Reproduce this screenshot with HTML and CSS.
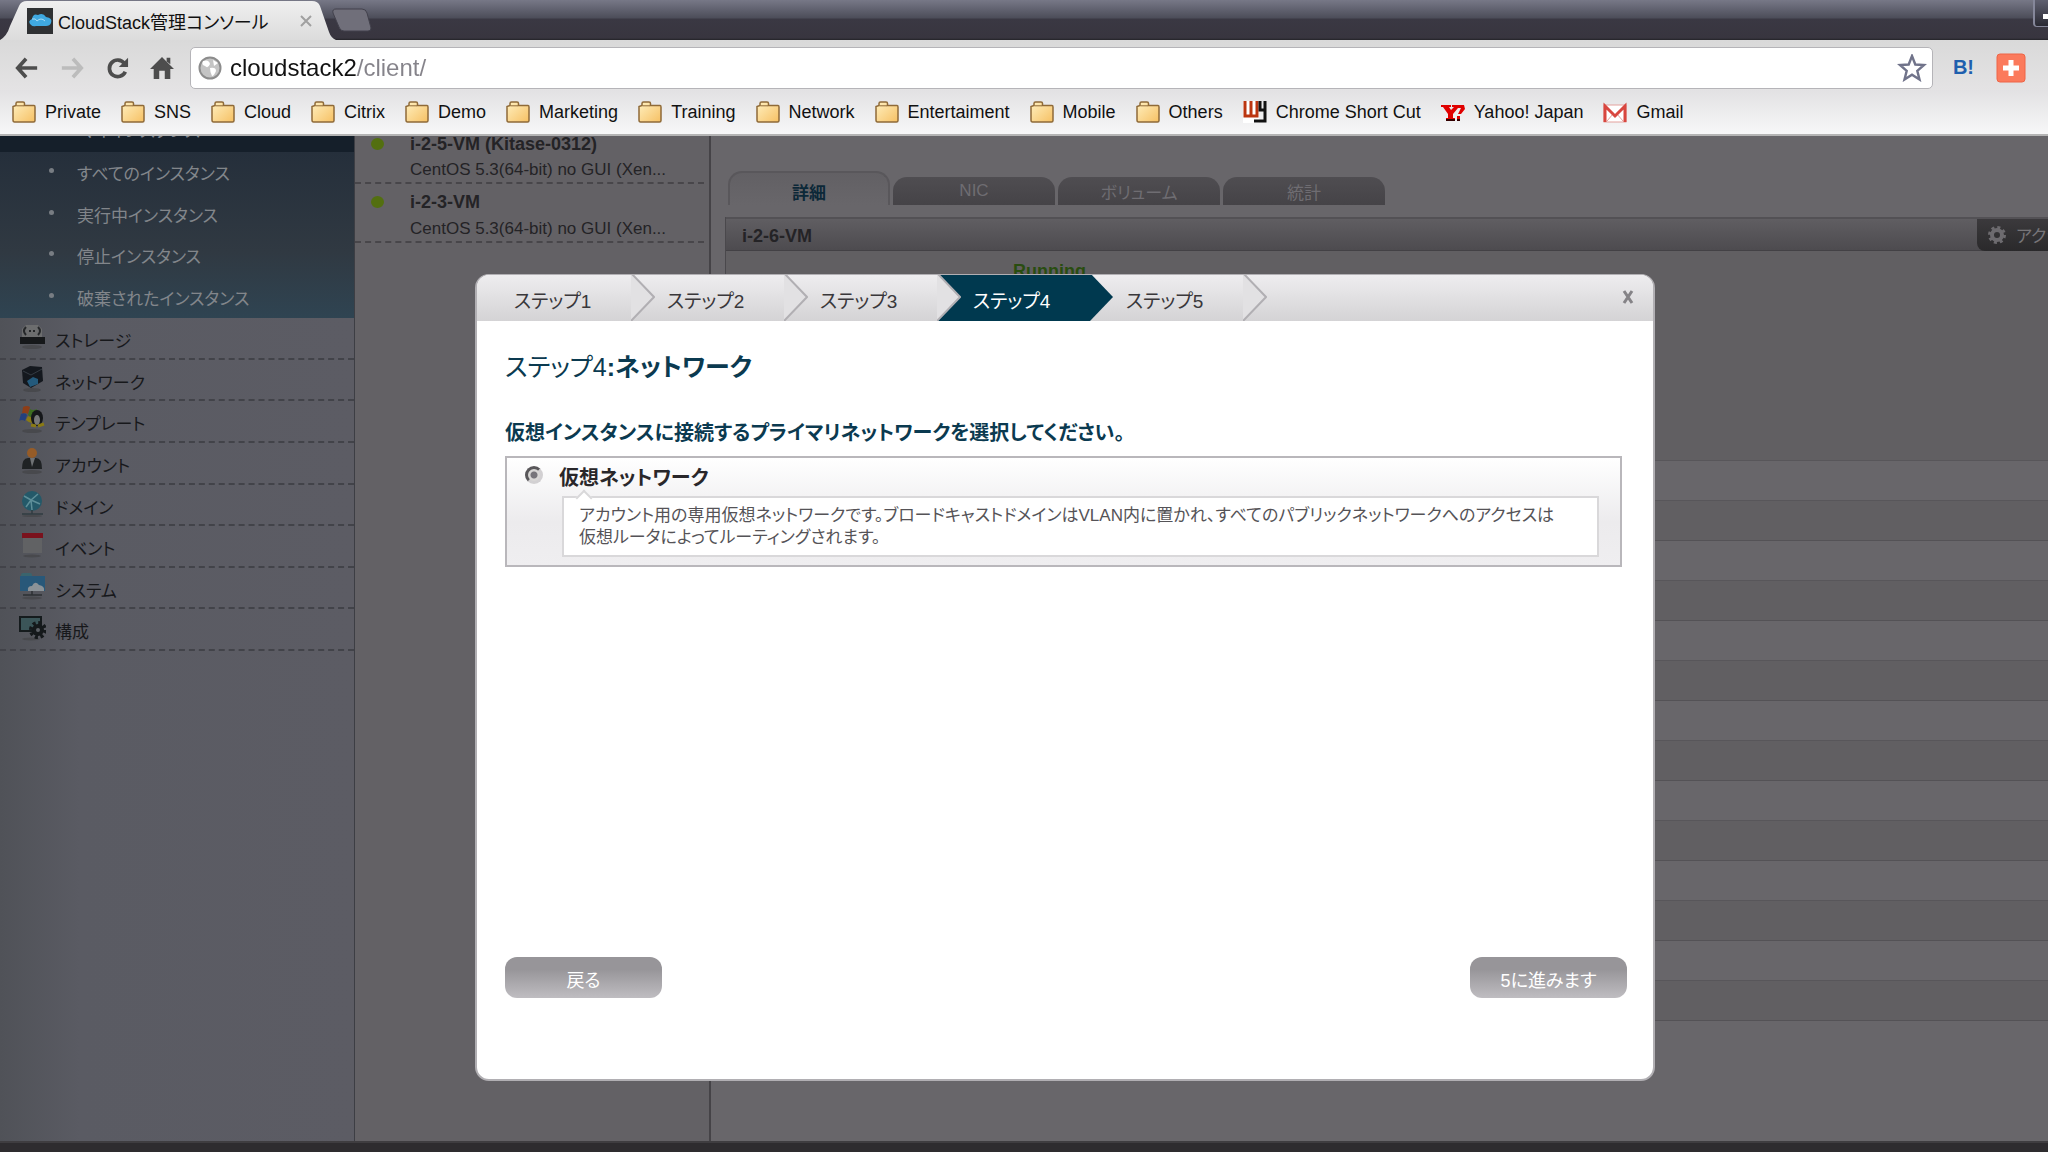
FILE: index.html
```html
<!DOCTYPE html>
<html lang="ja">
<head>
  <meta charset="UTF-8" />
  <meta name="viewport" content="width=device-width, initial-scale=1.0">
  <title>CloudStack管理コンソール</title>
  <link rel="stylesheet" href="styles.css">
</head>
<body>

  <svg class="defs" width="0" height="0" aria-hidden="true">
    <defs>
      <linearGradient id="folderFill" x1="0" y1="0" x2="1" y2="1">
        <stop offset="0" stop-color="#fff0c0" />
        <stop offset="1" stop-color="#f6c063" />
      </linearGradient>
      <linearGradient id="tabFill" x1="0" y1="0" x2="0" y2="1">
        <stop offset="0" stop-color="#efefef" />
        <stop offset="1" stop-color="#dcdcdc" />
      </linearGradient>
      <symbol id="folder" viewBox="0 0 24 22">
        <path d="M1 19V5.500L4 4.500V2.500Q4 1 5.500 1H11Q12.500 1 12.500 2.500V4.500H22Q23 4.500 23 6V19.500Q23 21 21.500 21H2.500Q1 21 1 19Z" fill="url(#folderFill)" stroke="#8f6a38" stroke-width="1.500" />
        <path d="M4.500 4.800H12" stroke="#8f6a38" />
      </symbol>
    </defs>
  </svg>

  <header class="browser">
    <div class="tabstrip">
      <div class="tab">
        <svg class="tab-shape" viewBox="0 0 336 40" preserveAspectRatio="none"><path d="M0 40Q7 36 10 26L19 6Q21 1 27 1H312Q318 1 320 6L329 32Q331 38 336 40Z" fill="url(#tabFill)" /></svg>
        <svg class="favicon" viewBox="0 0 26 26"><rect width="26" height="26" fill="#2f3133" /><path d="M4 17Q0 13 5 11Q6 5 11 7Q16 4 19 9Q26 10 24 15Q23 18 19 18H9Q6 19 4 17Z" fill="#3fa9e0" /><path d="M5 11Q9 10 10 13Q14 9 18 13" fill="none" stroke="#a6dcf6" /></svg>
        <span class="tab-title">CloudStack管理コンソール</span>
        <button class="tab-close" aria-label="閉じる"><svg viewBox="0 0 12 12"><path d="M1 1L11 11M11 1L1 11" stroke="#a0a0a0" stroke-width="2" /></svg></button>
      </div>
      <button class="new-tab" aria-label="新しいタブ"><svg viewBox="0 0 40 24"><path d="M4 1H30Q34 1 35 5L39 20Q39 23 36 23H12Q8 23 7 19L1 5Q0 1 4 1Z" fill="#706f7a" stroke="#42414c" /></svg></button>
      <button class="minimize" aria-label="最小化"><span></span></button>
    </div>

    <div class="toolbar">
      <div class="nav-buttons">
        <button aria-label="戻る"><svg viewBox="0 0 26 26"><path d="M3 13H24M12 3L3 13L12 23" fill="none" stroke="#4d4d4d" stroke-width="4" /></svg></button>
        <button aria-label="進む"><svg viewBox="0 0 26 26"><path d="M2 13H23M14 3L23 13L14 23" fill="none" stroke="#bcbcbc" stroke-width="4" /></svg></button>
        <button aria-label="再読み込み"><svg viewBox="0 0 26 26"><path d="M21 8A9 9 0 1 0 22 17" fill="none" stroke="#4d4d4d" stroke-width="4" /><path d="M25 2V12H15Z" fill="#4d4d4d" /></svg></button>
        <button aria-label="ホーム"><svg viewBox="0 0 26 26"><path d="M13 1L26 14H22V25H16V16H10V25H4V14H0Z" fill="#4d4d4d" /><path d="M18 2H22V9L18 6Z" fill="#4d4d4d" /></svg></button>
      </div>
      <div class="omnibox">
        <svg class="globe" viewBox="0 0 24 24"><circle cx="12" cy="12" r="10.500" fill="#c4c4c4" stroke="#8c8c8c" stroke-width="2" /><path d="M5 5Q11 3 12 8Q10 13 7 10Q3 9 5 5ZM12 12Q18 11 18 15Q16 20 14 20Q12 16 12 12ZM15 4L20 7L16 10Z" fill="#fff" /></svg>
        <input class="url" type="text" aria-label="アドレス" value="cloudstack2/client/">
        <svg class="star" viewBox="0 0 28 28"><path d="M14 2L17.300 10.500L26 11L19.300 16.800L21.500 25.500L14 20.700L6.500 25.500L8.700 16.800L2 11L10.700 10.500Z" fill="#fff" stroke="#70738a" stroke-width="2.400" /></svg>
      </div>
      <div class="extensions">
        <button class="hatena" aria-label="はてなブックマーク">B!</button>
        <button class="plus" aria-label="追加"><svg viewBox="0 0 30 30"><rect x="1" y="1" width="28" height="28" rx="3" fill="#fb7a5c" stroke="#ee6546" /><path d="M15 7V23M7 15H23" stroke="#fff" stroke-width="5" /></svg></button>
      </div>
    </div>

    <nav class="bookmarks">
      <a href="#"><svg><use href="#folder" /></svg>Private</a>
      <a href="#"><svg><use href="#folder" /></svg>SNS</a>
      <a href="#"><svg><use href="#folder" /></svg>Cloud</a>
      <a href="#"><svg><use href="#folder" /></svg>Citrix</a>
      <a href="#"><svg><use href="#folder" /></svg>Demo</a>
      <a href="#"><svg><use href="#folder" /></svg>Marketing</a>
      <a href="#"><svg><use href="#folder" /></svg>Training</a>
      <a href="#"><svg><use href="#folder" /></svg>Network</a>
      <a href="#"><svg><use href="#folder" /></svg>Entertaiment</a>
      <a href="#"><svg><use href="#folder" /></svg>Mobile</a>
      <a href="#"><svg><use href="#folder" /></svg>Others</a>
      <a href="#"><svg viewBox="0 0 24 22"><rect width="16" height="22" fill="#fff" /><path d="M2 0V15H14V0M8 0V15" fill="none" stroke="#bb3510" stroke-width="3" /><path d="M17 0V9H22M22 0V20H11" fill="none" stroke="#111" stroke-width="3" /></svg>Chrome Short Cut</a>
      <a href="#"><svg viewBox="0 0 24 22"><path d="M0 4H10V6H8L10 9L13 6H11V4H23L24 8L20 13H17L20 7H17L12 13V17H14V19H5V17H7V13L2 6H0ZM16 15H19V18H16Z" fill="#e00000" /><path d="M5 19H14M16 19H19" stroke="#300" stroke-width="2" /></svg>Yahoo! Japan</a>
      <a href="#"><svg viewBox="0 0 24 22"><rect x="1" y="4" width="22" height="17" fill="#fff" stroke="#e4a19d" /><path d="M4 20L10 13M20 20L14 13" stroke="#e4a19d" /><path d="M2 21V5L12 15L22 5V21" fill="none" stroke="#d8463f" stroke-width="3" /></svg>Gmail</a>
    </nav>
  </header>

  <main class="console">
    <aside class="sidebar">
      <a class="selected" href="#"><span>マイインスタンス</span></a>
      <ul class="submenu">
        <li><a href="#">すべてのインスタンス</a></li>
        <li><a href="#">実行中インスタンス</a></li>
        <li><a href="#">停止インスタンス</a></li>
        <li><a href="#">破棄されたインスタンス</a></li>
      </ul>
      <ul class="menu">
        <li><a href="#"><svg viewBox="0 0 28 28"><ellipse cx="14" cy="25" rx="10" ry="2" fill="#48494d" /><path d="M4 7L8 3H20L24 7V15H4Z" fill="#6c6d6e" /><path d="M8 5Q4 9 8 13M20 5Q24 9 20 13" fill="none" stroke="#252729" stroke-width="2" /><path d="M11 9H13M15 9H17" stroke="#252729" stroke-width="2" /><rect x="2" y="15" width="25" height="7" fill="#16181a" /></svg>ストレージ</a></li>
        <li><a href="#"><svg viewBox="0 0 28 28"><ellipse cx="14" cy="26" rx="9" ry="2" fill="#48494d" /><path d="M4 6L12 2L24 3L25 17L13 24L5 19Z" fill="#14181e" /><path d="M5 7L13 11L24 5" fill="none" stroke="#343b43" /><path d="M9 17L15 13L20 15L20 20L12 23Z" fill="#245a7c" /></svg>ネットワーク</a></li>
        <li><a href="#"><svg viewBox="0 0 28 28"><ellipse cx="14" cy="26" rx="10" ry="2" fill="#48494d" /><path d="M5 2Q9 0 12 2L10 9Q7 7 4 9Z" fill="#8d3e18" /><path d="M3 9Q7 7 9 10L7 16Q4 14 1 16Z" fill="#24407d" /><path d="M12 4Q15 6 19 4L17 12Q13 13 10 10Z" fill="#3c6d20" /><path d="M10 11Q13 13 16 12L14 18Q11 18 8 15Z" fill="#8a7a14" /><ellipse cx="19" cy="13" rx="6" ry="8" fill="#15171a" /><ellipse cx="19" cy="15" rx="3" ry="5" fill="#77787a" /><path d="M13 20L18 21M20 21L26 19" stroke="#8a7a14" stroke-width="3" /></svg>テンプレート</a></li>
        <li><a href="#"><svg viewBox="0 0 28 28"><ellipse cx="14" cy="25" rx="10" ry="2" fill="#48494d" /><circle cx="14" cy="6" r="5" fill="#965c28" /><path d="M4 22Q4 11 10 11H18Q24 11 24 22Z" fill="#1f2224" /><path d="M12 11H17L14 20Z" fill="#6f7275" /></svg>アカウント</a></li>
        <li><a href="#"><svg viewBox="0 0 28 28"><ellipse cx="14" cy="27" rx="10" ry="1" fill="#48494d" /><circle cx="14" cy="12" r="10" fill="#245969" /><path d="M6 7L13 11L20 5M8 18L13 11L22 15M13 11L14 21" fill="none" stroke="#5e8f99" stroke-width="1.500" /><path d="M14 21V25M4 25H25" stroke="#303d42" stroke-width="1.500" /></svg>ドメイン</a></li>
        <li><a href="#"><svg viewBox="0 0 28 28"><ellipse cx="14" cy="26" rx="9" ry="1.500" fill="#48494d" /><rect x="5" y="5" width="19" height="18" fill="#616264" /><rect x="4" y="3" width="21" height="5" fill="#7a121d" /></svg>イベント</a></li>
        <li><a href="#"><svg viewBox="0 0 28 28"><ellipse cx="14" cy="26" rx="10" ry="1.500" fill="#48494d" /><rect x="3" y="1" width="11" height="7" rx="2" fill="#3a646d" /><path d="M2 4H27V19H2Z" fill="#285879" /><path d="M10 19Q9 14 14 14Q17 8 21 13Q27 14 26 19Z" fill="#8b9297" /><path d="M14 19V23M5 23H24" stroke="#2c3033" stroke-width="1.500" /></svg>システム</a></li>
        <li><a href="#"><svg viewBox="0 0 28 28"><ellipse cx="13" cy="26" rx="9" ry="1.500" fill="#48494d" /><rect x="2" y="4" width="21" height="14" fill="#3b5558" stroke="#151b1d" stroke-width="2" /><circle cx="20" cy="17" r="6" fill="#15191b" /><circle cx="20" cy="17" r="7" fill="none" stroke="#15191b" stroke-width="4" stroke-dasharray="3 2.500" /><circle cx="20" cy="17" r="2" fill="#5d6166" /></svg>構成</a></li>
      </ul>
    </aside>

    <section class="instances">
      <a class="instance" href="#"><span class="status"></span><strong>i-2-5-VM (Kitase-0312)</strong><span class="os">CentOS 5.3(64-bit) no GUI (Xen...</span></a>
      <a class="instance" href="#"><span class="status"></span><strong>i-2-3-VM</strong><span class="os">CentOS 5.3(64-bit) no GUI (Xen...</span></a>
    </section>

    <section class="detail">
      <nav class="detail-tabs">
        <a class="active" href="#">詳細</a>
        <a href="#">NIC</a>
        <a href="#">ボリューム</a>
        <a href="#">統計</a>
      </nav>
      <div class="panel">
        <div class="panel-head">
          <h2>i-2-6-VM</h2>
          <button class="action"><svg viewBox="0 0 18 18"><circle cx="9" cy="9" r="5" fill="none" stroke="#6d6b6f" stroke-width="4" /><circle cx="9" cy="9" r="7.500" fill="none" stroke="#6d6b6f" stroke-width="3" stroke-dasharray="3 2.900" /></svg>アクション</button>
        </div>
        <p class="state">Running</p>
        <div class="rows"></div>
      </div>
    </section>

    <section class="wizard" role="dialog" aria-labelledby="wizardTitle">
      <header class="wizard-head">
        <ol class="steps">
          <li>ステップ1<svg viewBox="0 0 24 48"><path d="M0 0L23 24L0 48" /></svg></li>
          <li>ステップ2<svg viewBox="0 0 24 48"><path d="M0 0L23 24L0 48" /></svg></li>
          <li>ステップ3<svg viewBox="0 0 24 48"><path d="M0 0L23 24L0 48" /></svg></li>
          <li class="current">ステップ4<svg viewBox="0 0 24 48"><path d="M0 0L23 24L0 48" /></svg></li>
          <li>ステップ5<svg viewBox="0 0 24 48"><path d="M0 0L23 24L0 48" /></svg></li>
        </ol>
        <button class="wizard-close" aria-label="閉じる"><svg viewBox="0 0 12 14"><path d="M2 1L10 13M10 1L2 13" stroke="#858387" stroke-width="3" /></svg></button>
      </header>
      <form class="wizard-body">
        <h1 id="wizardTitle"><span>ステップ4</span>:ネットワーク</h1>
        <p class="prompt">仮想インスタンスに接続するプライマリネットワークを選択してください。</p>
        <div class="choice">
          <input type="radio" id="virtualNetwork" name="network">
          <div class="choice-text">
            <label for="virtualNetwork">仮想ネットワーク</label>
            <p>アカウント用の専用仮想ネットワークです。ブロードキャストドメインはVLAN内に置かれ、すべてのパブリックネットワークへのアクセスは<br>仮想ルータによってルーティングされます。</p>
          </div>
        </div>
        <div class="wizard-buttons">
          <button type="button">戻る</button>
          <button type="button">5に進みます</button>
        </div>
      </form>
    </section>
  </main>

  <footer class="bottom-bar"></footer>

</body>
</html>
```
FILE: styles.css
```css
* { box-sizing: border-box; }

html, body {
  margin: 0;
  padding: 0;
  overflow: hidden;
}

body {
  display: flex;
  flex-direction: column;
  height: 100vh;
  background: #68666a;
  font-family: "Liberation Sans", "Noto Sans CJK JP", sans-serif;
  font-size: 17px;
  font-feature-settings: "palt";
}

a { color: inherit; text-decoration: none; }
ul, ol { list-style: none; margin: 0; padding: 0; }
h1, h2, p { margin: 0; }
svg { display: block; flex: none; }

button {
  border: 0;
  padding: 0;
  background: none;
  font: inherit;
  font-feature-settings: inherit;
}

.defs { position: absolute; }

/* browser */
.browser {
  flex: none;
  border-bottom: 2px solid #b4b4b4;
}

.tabstrip {
  display: flex;
  height: 40px;
  background: linear-gradient(#777887, #4c4d59 18px, #3a3843 19px, #38353f 38px, #232227);
}

.tab {
  position: relative;
  display: flex;
  align-items: center;
  gap: 5px;
  width: 336px;
  padding: 1px 24px 0 27px;
}

.tab-shape {
  position: absolute;
  top: 0;
  left: 0;
  width: 100%;
  height: 100%;
}

.favicon { position: relative; width: 26px; height: 26px; }
.tab-title { position: relative; flex: 1; color: #111; font-size: 18px; white-space: nowrap; }
.tab-close { position: relative; width: 12px; height: 12px; }
.new-tab { width: 40px; margin-left: -4px; padding: 8px 0; }

.minimize {
  display: flex;
  align-items: center;
  justify-content: flex-end;
  width: 15px;
  height: 27px;
  margin-left: auto;
  border: 2px solid #85879a;
  border-width: 0 0 1px 2px;
  border-radius: 0 0 0 4px;
  background: linear-gradient(#5f6070, #2a2a33);
}

.minimize span {
  width: 5px;
  height: 5px;
  margin-top: 6px;
  background: #fff;
}

.toolbar {
  display: flex;
  align-items: center;
  height: 50px;
  padding: 5px 0 0 14px;
  background: linear-gradient(#d9d9d9, #e4e3e4);
}

.nav-buttons { display: flex; gap: 19px; }
.nav-buttons svg { width: 26px; height: 24px; }

.omnibox {
  display: flex;
  flex: 1;
  align-items: center;
  gap: 8px;
  height: 42px;
  margin-left: 15px;
  padding: 0 5px 0 7px;
  border: 1px solid #b5b4b8;
  border-radius: 5px;
  background: #fff;
}

.globe { width: 24px; height: 24px; }
.star { width: 30px; height: 28px; }

/* host part dark, path part grey */
.url {
  flex: 1;
  height: 36px;
  padding: 0;
  border: 0;
  outline: 0;
  background: linear-gradient(90deg, #111 127px, #85838a 127px);
  -webkit-background-clip: text;
  background-clip: text;
  color: transparent;
  font: 24px "Liberation Sans", sans-serif;
}

.extensions {
  display: flex;
  align-items: center;
  gap: 22px;
  padding: 0 22px 0 20px;
}

.hatena { color: #1f5fae; font-size: 20px; font-weight: bold; }
.plus svg { width: 30px; height: 30px; }

.bookmarks {
  display: flex;
  gap: 20px;
  height: 44px;
  padding: 0 12px;
  background: linear-gradient(#e2e1e3, #f7f7f8);
  color: #111;
  font-size: 18px;
  white-space: nowrap;
}

.bookmarks a { display: flex; align-items: center; gap: 9px; }
.bookmarks svg { width: 24px; height: 22px; }

/* console behind the dialog */
.console {
  position: relative;
  display: flex;
  flex: 1;
  min-height: 0;
}

.sidebar {
  width: 355px;
  border-right: 1px solid #3d3e44;
  background: linear-gradient(90deg, #505258, #5a5b63 80px, #5c5c64);
  overflow: hidden;
}

.selected {
  display: flex;
  align-items: flex-end;
  height: 16px;
  padding-left: 80px;
  background: #151f2a;
  color: #858a90;
  overflow: hidden;
}

.selected span { padding-bottom: 10px; }

.submenu {
  display: grid;
  grid-auto-rows: 1fr;
  height: 166px;
  background: linear-gradient(#252f3b, #303942 60%, #2f4452);
  color: #82868b;
}

.submenu a {
  display: flex;
  align-items: center;
  height: 100%;
}

.submenu a::before {
  content: "";
  width: 5px;
  height: 5px;
  margin: 0 23px 4px 49px;
  border-radius: 50%;
  background: #787d83;
}

.menu {
  display: grid;
  grid-auto-rows: 1fr;
  height: 333px;
  color: #17181b;
}

.menu li { border-bottom: 2px dashed #424349; }

.menu a {
  display: flex;
  align-items: center;
  gap: 9px;
  padding: 4px 0 0 18px;
}

.menu svg { width: 28px; height: 28px; margin-bottom: 7px; }

.instances {
  width: 356px;
  border-right: 2px solid #454347;
  background: #636165;
  color: #242326;
}

.instance {
  display: grid;
  grid-template-columns: 13px 1fr;
  column-gap: 26px;
  row-gap: 6px;
  align-items: center;
  height: 59px;
  margin-right: 5px;
  padding: 7px 0 2px 16px;
  border-bottom: 2px dashed #48464a;
}

.instance:first-child {
  height: 48px;
  padding-top: 0;
  align-content: end;
}

.instance strong { font-size: 18px; line-height: 20px; }
.status { width: 13px; height: 12px; border-radius: 50%; background: #536f10; }
.os { grid-column: 2; line-height: 20px; white-space: nowrap; }

.detail {
  flex: 1;
  min-width: 0;
  padding: 35px 0 0 14px;
}

.detail-tabs {
  display: flex;
  align-items: flex-end;
  gap: 3px;
  padding-left: 3px;
  color: #6f6d72;
}

.detail-tabs a {
  display: flex;
  align-items: center;
  justify-content: center;
  width: 162px;
  height: 28px;
  border-radius: 14px 14px 0 0;
  background: linear-gradient(#4f4d51, #454347);
}

.detail-tabs .active {
  height: 34px;
  padding-top: 4px;
  border: 2px solid #59575b;
  border-bottom: 0;
  background: linear-gradient(#626064, #68666a);
  color: #0c2838;
  font-weight: bold;
}

.panel {
  margin-top: 12px;
  border-left: 1px solid #4a484c;
}

.panel-head {
  display: flex;
  align-items: center;
  justify-content: space-between;
  height: 34px;
  padding-left: 16px;
  border-top: 2px solid #535155;
  border-bottom: 1px solid #434145;
  background: linear-gradient(#605e62, #4d4b4f);
}

.panel-head h2 { padding-top: 4px; color: #242326; font-size: 18px; }

.action {
  display: flex;
  align-items: center;
  gap: 10px;
  width: 71px;
  height: 32px;
  padding-left: 11px;
  border-radius: 0 0 0 8px;
  background: linear-gradient(#3b393c, #2a292b);
  color: #777579;
  white-space: nowrap;
  overflow: hidden;
}

.action svg { width: 18px; height: 18px; }

.state {
  height: 210px;
  padding: 10px 0 0 287px;
  border-bottom: 1px solid #58565a;
  background: #615f62;
  color: #294d10;
  font-size: 18px;
  font-weight: bold;
}

.rows {
  height: 561px;
  background: repeating-linear-gradient(#68666a 0 39px, #58565a 39px 40px, #615f62 40px 79px, #545256 79px 80px);
}

/* wizard dialog */
.wizard {
  position: absolute;
  top: 138px;
  right: 393px;
  left: 475px;
  border: 2px solid #b1afb3;
  border-top-width: 1px;
  border-radius: 14px;
  background: #fff;
}

.wizard-head {
  display: flex;
  align-items: center;
  justify-content: space-between;
  height: 46px;
  padding: 0 19px 2px 0;
  border-radius: 12px 12px 0 0;
  background: linear-gradient(#eeedef, #d4d3d5);
  overflow: hidden;
}

.steps { display: flex; padding-left: 1px; color: #39373a; font-size: 19px; }

.steps li {
  position: relative;
  display: flex;
  align-items: center;
  width: 153px;
  height: 48px;
  padding: 4px 0 0 36px;
}

.steps svg {
  position: absolute;
  z-index: 1;
  top: 0;
  right: -24px;
  width: 24px;
  height: 48px;
  fill: #e2e1e3;
  stroke: #b1afb3;
  stroke-width: 2;
}

.steps .current { background: #00394f; color: #fff; }
.steps .current svg { fill: #00394f; stroke: none; }

.wizard-close { width: 12px; height: 14px; }

.wizard-body { padding: 28px 26px 81px 28px; color: #39373a; }

.wizard-body h1 {
  color: #0b3a50;
  font-size: 25px;
  line-height: 36px;
}

.wizard-body h1 span { font-weight: normal; }

.prompt {
  margin-top: 34px;
  color: #0b3a50;
  font-size: 20px;
  font-weight: bold;
  line-height: 28px;
}

.choice {
  display: flex;
  gap: 16px;
  margin: 9px 5px 0 0;
  padding: 8px 21px 8px 18px;
  border: 2px solid #b9b7bb;
  background: linear-gradient(#fff, #ecebed 60%, #efeef0);
}

.choice input {
  appearance: none;
  flex: none;
  width: 18px;
  height: 18px;
  margin: 0;
  border: 3px solid;
  border-color: #59575a #d2d0d2 #d2d0d2 #59575a;
  border-radius: 50%;
  background: radial-gradient(#77757a 0 3px, #d8d7d5 4px);
}

.choice-text { flex: 1; }

.choice label {
  display: block;
  color: #29272a;
  font-size: 20px;
  font-weight: bold;
  line-height: 24px;
}

.choice p {
  position: relative;
  margin: 6px 0 0 3px;
  padding: 7px 15px 6px;
  border: 2px solid #d9d8da;
  background: #fff;
  color: #555357;
  font-size: 17px;
  line-height: 22px;
}

/* small pointer towards the label */
.choice p::before {
  content: "";
  position: absolute;
  top: -6px;
  left: 14px;
  width: 10px;
  height: 10px;
  border: 2px solid #d9d8da;
  border-width: 2px 0 0 2px;
  background: #fff;
  transform: rotate(45deg);
}

.wizard-buttons {
  display: flex;
  justify-content: space-between;
  margin-top: 390px;
}

.wizard-buttons button {
  width: 157px;
  height: 41px;
  padding-top: 2px;
  border-radius: 12px;
  background: linear-gradient(#979599 30%, #bfbdc1);
  color: #fff;
  font-size: 18px;
}

.bottom-bar {
  flex: none;
  height: 11px;
  border-top: 2px solid #3f3d40;
  background: #2e2c2f;
}
```
